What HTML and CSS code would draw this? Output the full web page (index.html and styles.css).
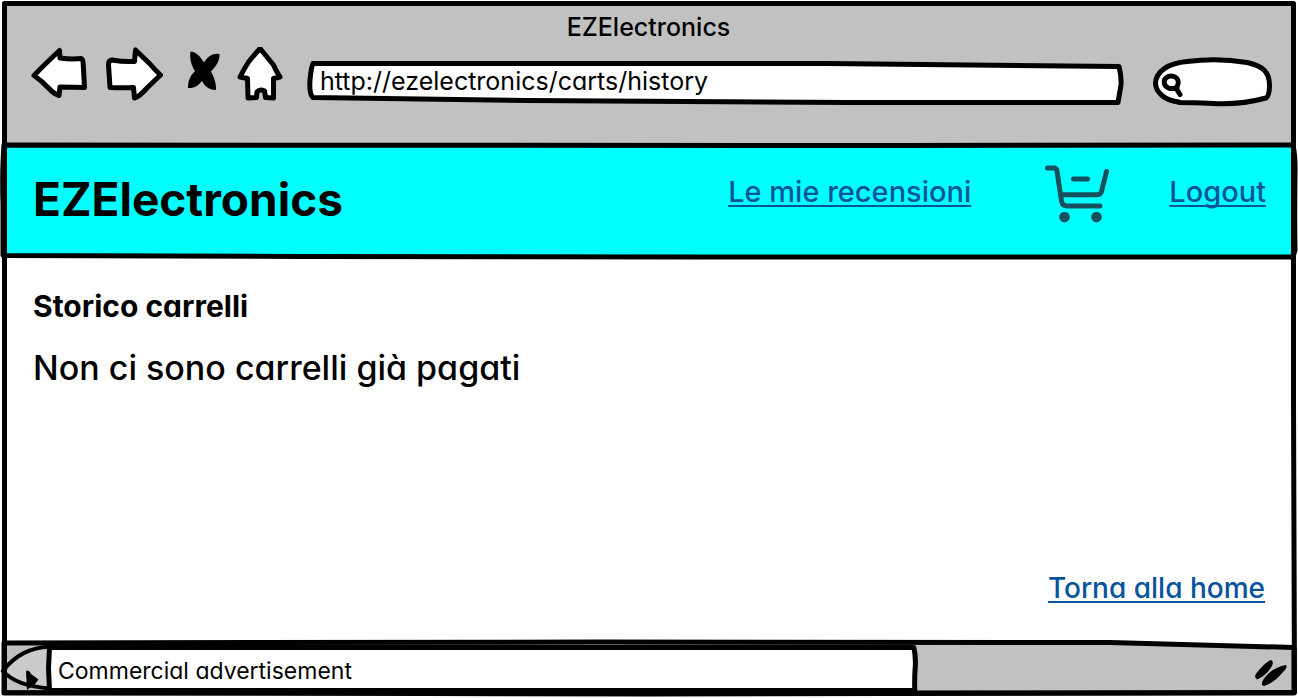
FILE: index.html
```html
<!DOCTYPE html>
<html lang="it">
<head>
<meta charset="utf-8">
<meta name="viewport" content="width=device-width, initial-scale=1">
<title>EZElectronics</title>
<link rel="stylesheet" href="styles.css">
</head>
<body>
<div class="window">
  <section class="chrome">
    <p class="chrome-title">EZElectronics</p>
    <div class="toolbar">
      <div class="nav-buttons">
        <button type="button" class="tool" aria-label="Indietro">
          <svg class="ink" width="58" height="60" viewBox="31 47 58 60"><path d="M59.500 50.500L60 58Q71 59.500 81.500 58.500Q83 59 83.200 64L84.500 87.500L60 87L59 95.500Q54 94 49 88.500Q42 81 34 75.500Q43 66 59.500 50.500Z"/></svg>
        </button>
        <button type="button" class="tool" aria-label="Avanti">
          <svg class="ink" width="58" height="60" viewBox="105 47 58 60"><path d="M135.500 50L134.500 61.500Q123 62 112 60Q108.500 60 108.500 65L110 87.500Q122 88 133.500 87.500L134.500 98Q139 97 147 88L160.500 75Q155 70 150 64Z"/></svg>
        </button>
        <button type="button" class="tool" aria-label="Interrompi">
          <svg width="42" height="60" viewBox="179 47 42 60"><path d="M190.500 51.500C196 52 200 56 204 62.500C208 56 213 53 219.500 54C220 61 216 66 211 71.500C214 77 216.500 84 216 90C210 90 205 87 202 81C198 86 194 88.500 188 88C188 81 190 76 195 71C191 65 189.500 58 190.500 51.500Z"/></svg>
        </button>
        <button type="button" class="tool" aria-label="Home">
          <svg class="ink" width="46" height="60" viewBox="237 47 46 60"><path d="M260 48.500Q267 57 273.500 65Q276 71 280 77L273.500 78.500L273.500 98L265.500 97.500L264.500 91Q260 88.500 257 92L256.500 97.500L248 98L247.500 78.500L240 77Q244 69 248.500 62Q255 54 260 48.500Z"/></svg>
        </button>
      </div>
      <label class="field address">
        <svg class="ink sketch" viewBox="0 1 819 60" preserveAspectRatio="none" aria-hidden="true"><path d="M6 17.500Q280 16.500 520 17.500L812 20.500Q814.500 30 814 39L811 56.500L540 56.500L220 54.500L6 51.500Q2 48 3 34Q4 22 6 17.500Z"/></svg>
        <input type="text" aria-label="Indirizzo" value="http://ezelectronics/carts/history">
      </label>
      <label class="field search">
        <svg class="ink sketch" viewBox="1150 47 122 60" preserveAspectRatio="none" aria-hidden="true"><path d="M1179 102C1165 101 1155.500 92 1155.500 83C1156 71 1169 63 1187 61.500Q1218 57.500 1247 62.500C1263 66 1269.500 72 1269.500 85Q1269.500 96 1266 98Q1240 105 1213 103.500Q1191 102.500 1179 102.500Z"/><path d="M1177 88.500H1170C1163 87 1163 80 1166.500 77.500C1170 75 1175 76 1177 78.500C1179 81 1178.500 85 1176 88L1180 94.500"/></svg>
        <input type="search" aria-label="Cerca">
      </label>
    </div>
  </section>

  <header class="site-header">
    <svg class="ink cyan sketch" viewBox="4 145 1290 112" preserveAspectRatio="none" aria-hidden="true"><path d="M4 145L900 145.500L1292 145Q1295.500 148 1295 175Q1294.500 220 1295 250L1293 257L700 257L300 256.500L3 255.500L3 205Q2 170 4 145Z"/></svg>
    <h1 class="brand">EZElectronics</h1>
    <nav class="site-nav">
      <a href="#recensioni">Le mie recensioni</a>
      <a class="cart" href="#carrello" aria-label="Carrello">
        <svg width="78" height="60" viewBox="1034 164 78 60"><path class="cart-line" d="M1050.500 168H1057Q1059.500 168 1060 171L1064.500 201Q1065.500 206 1070 206H1103M1065 194.800H1100Q1103.500 194.800 1104.500 191.500L1109.500 171.500M1076.500 179H1090.500"/><circle cx="1067.500" cy="217" r="5.300"/><circle cx="1099.500" cy="217" r="5.300"/></svg>
      </a>
      <a href="#logout">Logout</a>
    </nav>
  </header>

  <main class="page">
    <h2>Storico carrelli</h2>
    <p>Non ci sono carrelli già pagati</p>
    <a class="home-link" href="#home">Torna alla home</a>
  </main>

  <footer class="status">
    <svg class="ink grey sketch" viewBox="4 643 1290 50" preserveAspectRatio="none" aria-hidden="true"><path d="M4 643L600 642L1110 642.500L1294 647.500V693H4Z"/></svg>
    <svg class="corner" width="48" height="50" viewBox="0 643 48 50" aria-hidden="true"><path class="halo" d="M46 649Q20 651 6 671Q16 684 46 686Z"/><path class="edge" d="M50 646.500Q20 648 3 671Q16 686 50 688.500"/><path d="M26 671Q29 669 31 674L38.500 679.500L35 684L27 690Z"/></svg>
    <div class="status-text">
      <svg class="ink sketch" viewBox="48 643 868 50" preserveAspectRatio="none" aria-hidden="true"><path d="M49.500 647.500H913.500Q915.500 655 915 666Q914 680 914.500 690.500H49.500L48.500 668Z"/></svg>
      <span>Commercial advertisement</span>
    </div>
    <svg class="grip" width="34" height="50" viewBox="1254 643 34 50" aria-hidden="true"><path d="M1255 677Q1255 674 1260 669Q1266 662 1271 660Q1274 661 1272 666Q1266 676 1257 679.500ZM1262 685Q1261 681 1268 674Q1275 667 1286 665Q1288 667 1283 672Q1274 683 1264 686Z"/></svg>
  </footer>

  <svg class="ink frame sketch" viewBox="0 0 1298 698" preserveAspectRatio="none" aria-hidden="true"><path d="M4.500 3.500H1293.500V400L1294.500 692.500L650 694L4.500 692.500V400Z"/></svg>
</div>
</body>
</html>
```
FILE: styles.css
```css
* {
  box-sizing: border-box;
}

body {
  margin: 0;
  background: #fff;
  color: #000;
  font-family: Inter, "Open Sans", sans-serif;
  font-feature-settings: "cv11" 1;
  font-size: 25px;
  font-weight: 500;
  line-height: 32px;
}

h1, h2, p {
  margin: 0;
}

.window {
  position: relative;
  display: flex;
  flex-direction: column;
  min-height: 100vh;
  padding: 4px 4px 5px;
}

.sketch {
  position: absolute;
  inset: 0;
  width: 100%;
  height: 100%;
  overflow: visible;
}

.ink {
  fill: #fff;
  stroke: #000;
  stroke-width: 5px;
  stroke-linejoin: round;
  stroke-linecap: round;
}

.ink path {
  vector-effect: non-scaling-stroke;
}

.cyan {
  fill: #0ff;
}

.grey {
  fill: #c1c1c1;
}

.frame {
  fill: none;
  pointer-events: none;
}

.chrome {
  padding: 7px 22px 38px 27px;
  background: #c1c1c1;
}

.chrome-title {
  padding: 0 6px 4px 0;
  text-align: center;
}

.toolbar {
  display: flex;
  gap: 24px;
}

.nav-buttons {
  display: flex;
  gap: 16px;
}

.tool {
  padding: 0;
  border: 0;
  background: none;
  cursor: pointer;
}

.tool svg {
  display: block;
}

.field {
  position: relative;
  height: 60px;
  padding: 12px 12px 0 13px;
}

.address {
  flex: 1;
}

.search {
  width: 122px;
  padding-left: 34px;
}

.field input {
  position: relative;
  width: 100%;
  height: 44px;
  padding: 0;
  border: 0;
  outline: 0;
  background: none;
  color: inherit;
  font: inherit;
  font-weight: 400;
  font-feature-settings: inherit;
}

.site-header {
  position: relative;
  display: flex;
  justify-content: space-between;
  align-items: center;
  height: 112px;
  padding: 0 28px 4px 29px;
}

.brand {
  position: relative;
  font-size: 46px;
  line-height: 56px;
}

.site-nav {
  position: relative;
  display: flex;
  align-items: center;
  gap: 60px;
  padding-bottom: 10px;
}

.site-nav a {
  padding-bottom: 4px;
  font-size: 29px;
}

.site-nav .cart {
  padding: 0;
}

a {
  color: #07549a;
  font-size: 28px;
  line-height: 40px;
  text-decoration-thickness: 2px;
  text-underline-offset: 3px;
  text-decoration-skip-ink: none;
}

.cart svg {
  display: block;
  fill: #15505e;
}

.cart .cart-line {
  fill: none;
  stroke: #15505e;
  stroke-width: 5px;
  stroke-linecap: round;
  stroke-linejoin: round;
}

.page {
  display: flex;
  flex: 1;
  flex-direction: column;
  gap: 20px;
  padding: 29px 29px 35px;
}

.page h2 {
  font-size: 30px;
  line-height: 40px;
}

.page p {
  font-size: 34px;
  line-height: 44px;
}

.home-link {
  align-self: flex-end;
  margin-top: auto;
}

.status {
  position: relative;
  display: flex;
  height: 50px;
}

.corner {
  position: relative;
  flex: none;
  margin-left: -4px;
  overflow: visible;
}

.corner .halo {
  fill: #cbcbcb;
  stroke: #cbcbcb;
  stroke-width: 7px;
}

.corner .edge {
  fill: none;
  stroke: #000;
  stroke-width: 4px;
}

.status-text {
  position: relative;
  width: calc(67% + 4px);
  padding: 12px 10px;
  font-size: 23px;
  font-weight: 400;
  line-height: 32px;
}

.status-text span {
  position: relative;
}

.grip {
  position: relative;
  margin-left: auto;
  margin-right: 6px;
}
```
